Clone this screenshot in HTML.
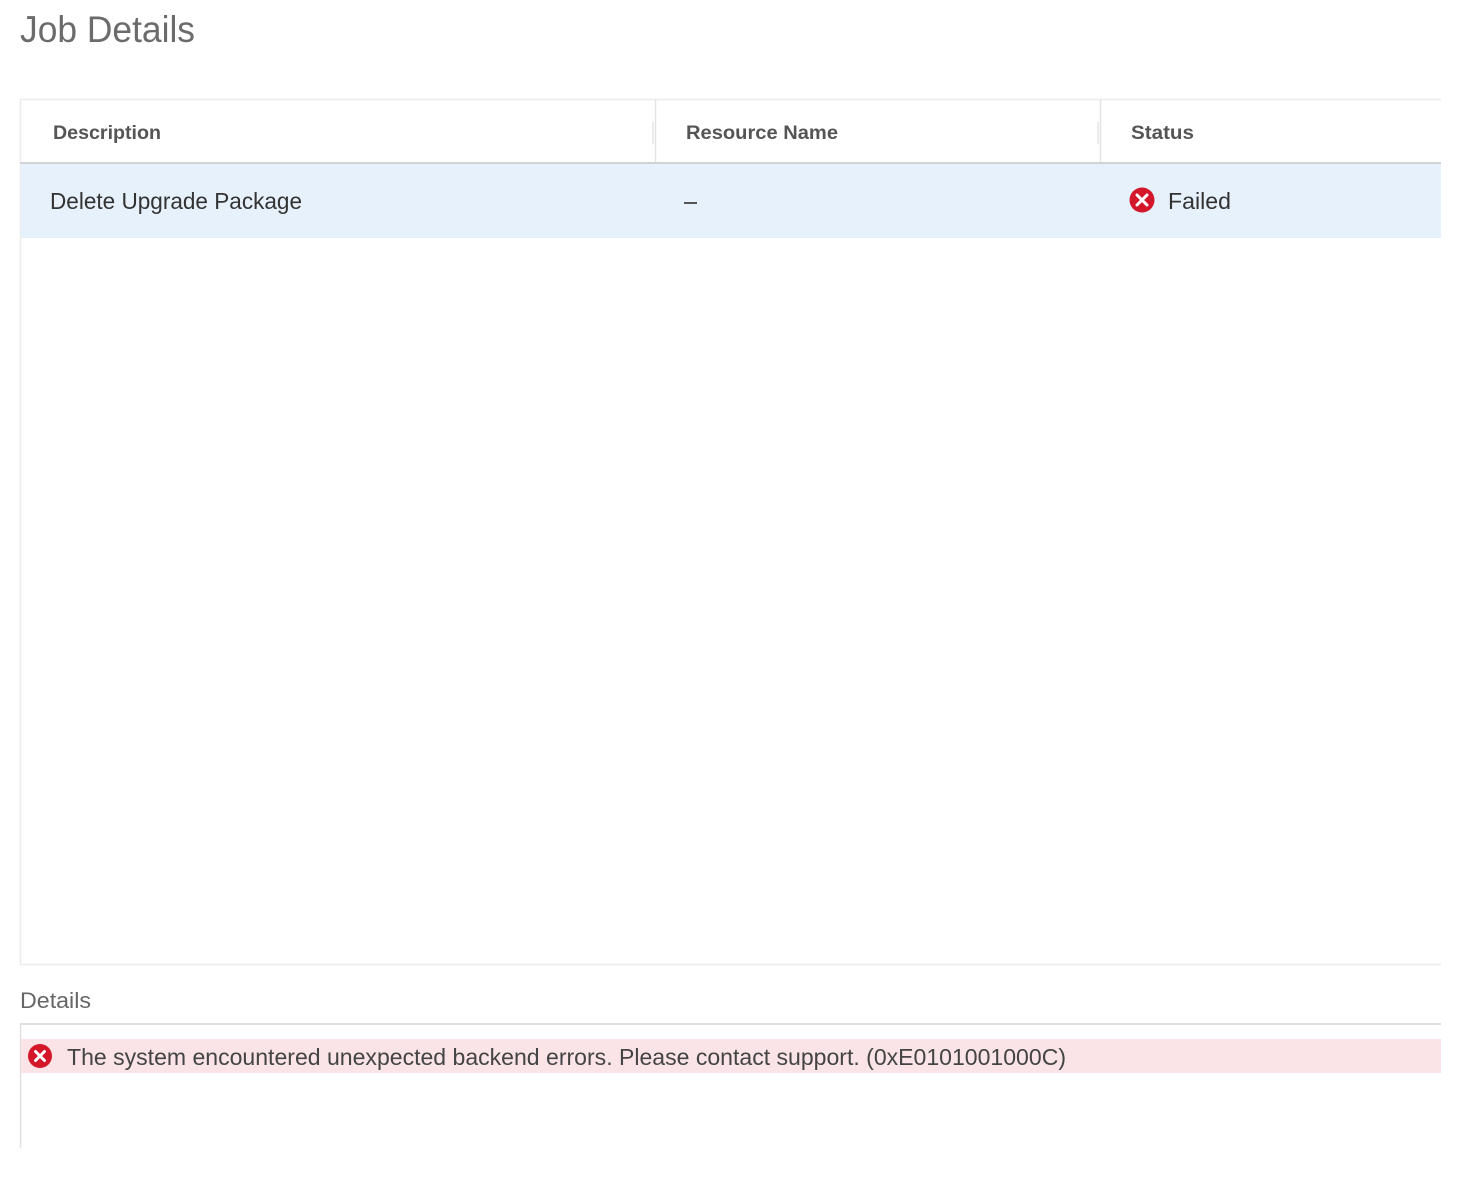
<!DOCTYPE html>
<html><head><meta charset="utf-8"><style>
html,body{margin:0;padding:0;background:#fff;width:1475px;height:1178px;overflow:hidden}
svg{display:block}
text{font-family:"Liberation Sans",sans-serif}
</style></head><body>
<svg width="1475" height="1178" viewBox="0 0 1475 1178" xmlns="http://www.w3.org/2000/svg">
<rect width="1475" height="1178" fill="#fff"/>
<text x="20" y="42" font-size="37" fill="#6b6b6b" textLength="175" lengthAdjust="spacingAndGlyphs">Job Details</text>
<!-- table -->
<line x1="20" y1="99.5" x2="1441" y2="99.5" stroke="#ececec" stroke-width="1.5"/>
<line x1="20.5" y1="99" x2="20.5" y2="965" stroke="#ececec" stroke-width="1.5"/>
<line x1="20" y1="964.5" x2="1441" y2="964.5" stroke="#ececec" stroke-width="1.5"/>
<line x1="20" y1="163" x2="1441" y2="163" stroke="#cfd3d6" stroke-width="2"/>
<rect x="21" y="164" width="1420" height="74" fill="#e6f1fb"/>
<line x1="655.5" y1="100" x2="655.5" y2="162" stroke="#e4e4e4" stroke-width="1.5"/>
<line x1="1100.5" y1="100" x2="1100.5" y2="162" stroke="#e4e4e4" stroke-width="1.5"/>
<line x1="653" y1="122" x2="653" y2="144" stroke="#d8d8d8" stroke-width="1"/>
<line x1="1098" y1="122" x2="1098" y2="144" stroke="#d8d8d8" stroke-width="1"/>
<text x="53" y="139" font-size="19" font-weight="bold" fill="#555" textLength="108" lengthAdjust="spacingAndGlyphs">Description</text>
<text x="686" y="139" font-size="19" font-weight="bold" fill="#555" textLength="152" lengthAdjust="spacingAndGlyphs">Resource Name</text>
<text x="1131" y="139" font-size="19" font-weight="bold" fill="#555" textLength="63" lengthAdjust="spacingAndGlyphs">Status</text>
<text x="50" y="209" font-size="23" fill="#333" textLength="252" lengthAdjust="spacingAndGlyphs">Delete Upgrade Package</text>
<line x1="684" y1="203" x2="697" y2="203" stroke="#555" stroke-width="2"/>
<circle cx="1142" cy="200" r="12.5" fill="#d4172a"/>
<path d="M1137 195 L1147 205 M1147 195 L1137 205" stroke="#fff" stroke-width="3" stroke-linecap="round"/>
<text x="1168" y="209" font-size="23" fill="#333" textLength="63" lengthAdjust="spacingAndGlyphs">Failed</text>
<!-- details -->
<text x="20" y="1008" font-size="22" fill="#666" textLength="71" lengthAdjust="spacingAndGlyphs">Details</text>
<line x1="20" y1="1024" x2="1441" y2="1024" stroke="#e0e0e0" stroke-width="2"/>
<line x1="20.5" y1="1024" x2="20.5" y2="1148" stroke="#e0e0e0" stroke-width="1.5"/>
<rect x="21" y="1039" width="1420" height="34" fill="#fae4e7"/>
<circle cx="40" cy="1056" r="12" fill="#d4172a"/>
<path d="M35.5 1051.5 L44.5 1060.5 M44.5 1051.5 L35.5 1060.5" stroke="#fff" stroke-width="3" stroke-linecap="round"/>
<text x="67" y="1065" font-size="23" fill="#444" textLength="999" lengthAdjust="spacingAndGlyphs">The system encountered unexpected backend errors. Please contact support. (0xE0101001000C)</text>
</svg>
</body></html>
